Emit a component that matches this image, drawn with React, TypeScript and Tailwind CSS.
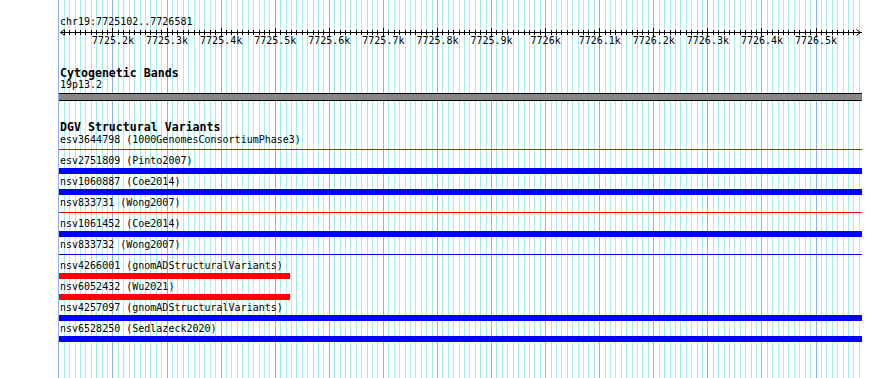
import React from "react";

// chr19:7725102..7726581 drawn over x 60..861
const START = 7725102;
const PX_PER_BP = 0.5408;
const X0 = 60;
const TRACK_LEFT = 59;
const TRACK_WIDTH = 803;

const bpToX = (bp: number) => X0 + (bp - START) * PX_PER_BP;

type Feature = {
  name: string;
  source: string;
  kind: "blueBar" | "redBar" | "redLine" | "blueLine" | "redShort";
};

const features: Feature[] = [
  { name: "esv3644798", source: "1000GenomesConsortiumPhase3", kind: "redLine" },
  { name: "esv2751809", source: "Pinto2007", kind: "blueBar" },
  { name: "nsv1060887", source: "Coe2014", kind: "blueBar" },
  { name: "nsv833731", source: "Wong2007", kind: "redLine" },
  { name: "nsv1061452", source: "Coe2014", kind: "blueBar" },
  { name: "nsv833732", source: "Wong2007", kind: "blueLine" },
  { name: "nsv4266001", source: "gnomADStructuralVariants", kind: "redShort" },
  { name: "nsv6052432", source: "Wu2021", kind: "redShort" },
  { name: "nsv4257097", source: "gnomADStructuralVariants", kind: "blueBar" },
  { name: "nsv6528250", source: "Sedlazeck2020", kind: "blueBar" },
];

const gridBps: number[] = [];
for (let bp = 7725100; bp <= 7726580; bp += 10) gridBps.push(bp);

const tickLabels = [
  "7725.2k", "7725.3k", "7725.4k", "7725.5k", "7725.6k", "7725.7k", "7725.8k",
  "7725.9k", "7726k", "7726.1k", "7726.2k", "7726.3k", "7726.4k", "7726.5k",
];

function Grid() {
  return (
    <svg className="absolute inset-0" width={890} height={378} shapeRendering="crispEdges">
      {gridBps.map((bp) => {
        const x = Math.floor(bpToX(bp)) + 0.5;
        const major = bp % 100 === 0;
        return (
          <line key={bp} x1={x} x2={x} y1={0} y2={378} stroke={major ? "#88b4e8" : "#a8ecec"} strokeWidth={1} />
        );
      })}
    </svg>
  );
}

function Ruler() {
  // local coords: x = page x - TRACK_LEFT, y = page y - 27
  const ticks = gridBps.filter((bp) => bp > 7725100 && bp < 7726580);
  return (
    <svg width={TRACK_WIDTH} height={19} className="block overflow-visible">
      <g shapeRendering="crispEdges" stroke="#000" strokeWidth={1}>
        <line x1={1} x2={803} y1={5.5} y2={5.5} />
        {ticks.map((bp) => {
          const x = Math.floor(bpToX(bp)) - TRACK_LEFT + 0.5;
          const major = bp % 100 === 0;
          return <line key={bp} x1={x} x2={x} y1={major ? 1 : 3} y2={major ? 9 : 8} />;
        })}
      </g>
      <g stroke="#000" strokeWidth={1} fill="none">
        <polyline points="5.5,2.5 1.5,5.5 5.5,8.5" />
        <polyline points="797.5,2.5 801.5,5.5 797.5,8.5" />
      </g>
      <g fontFamily="'DejaVu Sans Mono', monospace" fontSize={10} fill="#000" textAnchor="middle">
        {tickLabels.map((label, i) => {
          const bp = 7725200 + i * 100;
          const x = bpToX(bp) - TRACK_LEFT;
          return (
            <text key={label} x={x} y={16.5}>
              {label}
            </text>
          );
        })}
      </g>
    </svg>
  );
}

function Glyph({ kind }: { kind: Feature["kind"] }) {
  if (kind === "blueBar") return <div className="mt-[2px] h-[6px] w-[803px] bg-[#0000ff]" />;
  if (kind === "redShort") return <div className="mt-[2px] h-[6px] w-[231px] bg-[#ff0000]" />;
  if (kind === "redLine")
    return (
      <div className="mt-[2px] h-[6px] w-[803px] pt-[2px]">
        <div className="h-px bg-[#ff0000]" />
      </div>
    );
  return (
    <div className="mt-[2px] h-[6px] w-[803px] pt-[2px]">
      <div className="h-px bg-[#0000ff]" />
    </div>
  );
}

export default function App() {
  return (
    <div className="relative h-[378px] w-[890px] overflow-hidden bg-white font-['DejaVu_Sans_Mono',monospace] text-black">
      <Grid />
      <div className="relative ml-[59px] flex w-[803px] flex-col pt-[17px]">
        <div className="h-[10px] pl-[1px] text-[10px] leading-[10px] whitespace-nowrap">chr19:7725102..7726581</div>
        <Ruler />

        <div className="mt-[21px] h-[12px] pl-[1px] text-[11.6px] leading-[12px] font-bold whitespace-nowrap">
          Cytogenetic Bands
        </div>
        <div className="mt-[1px] h-[10px] pl-[1px] text-[10px] leading-[10px]">19p13.2</div>
        <div className="mt-[3px] h-[8px] border-y border-black bg-[#888888]" />

        <div className="mt-[20px] h-[12px] pl-[1px] text-[11.6px] leading-[12px] font-bold whitespace-nowrap">
          DGV Structural Variants
        </div>
        <div className="mt-[2px] flex flex-col">
          {features.map((f) => (
            <div key={f.name} className="flex h-[21px] flex-col">
              <div className="h-[10px] pl-[1px] text-[10px] leading-[10px] whitespace-nowrap">
                {f.name} ({f.source})
              </div>
              <Glyph kind={f.kind} />
            </div>
          ))}
        </div>
      </div>
    </div>
  );
}
